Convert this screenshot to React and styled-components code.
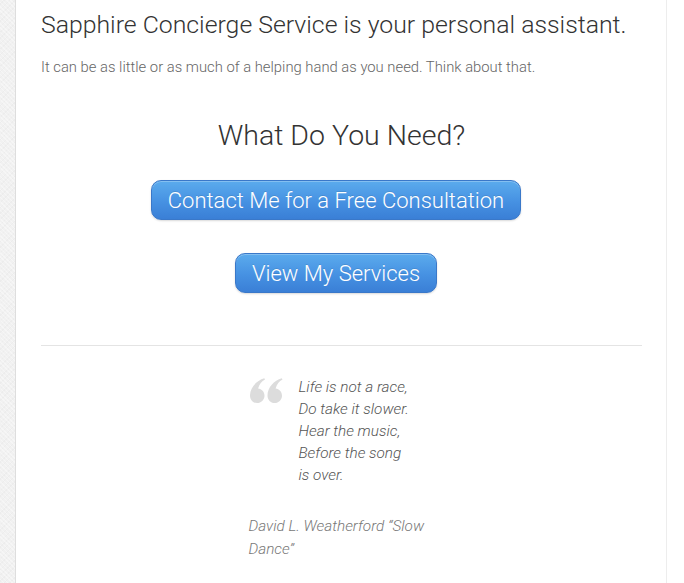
import React from "react";
import styled, { createGlobalStyle } from "styled-components";

const Global = createGlobalStyle`
  html, body { margin: 0; padding: 0; background: #fff; }
  body { font-family: Roboto, "Liberation Sans", Arial, sans-serif; }
  * { box-sizing: border-box; }
`;

const Page = styled.div`
  display: flex;
  min-height: 583px;
  background: #fff;
`;

const Gutter = styled.div`
  width: 16px;
  flex: none;
  background-color: #f1f1f1;
  background-image:
    repeating-linear-gradient(45deg, rgba(255,255,255,0.35) 0 1px, transparent 1px 3px),
    repeating-linear-gradient(-45deg, rgba(0,0,0,0.02) 0 1px, transparent 1px 4px);
  border-right: 1px solid #dedede;
`;

const Panel = styled.main`
  width: 651px;
  flex: none;
  background: #fff;
  border-right: 1px solid #ededed;
  padding: 9px 24px 40px 25px;
`;

const Title = styled.h1`
  margin: 0;
  font-family: Roboto, "Liberation Sans", sans-serif;
  font-weight: 300;
  font-size: 24.8px;
  line-height: 31px;
  color: #333;
`;

const Lead = styled.p`
  margin: 17px 0 0;
  font-family: Roboto, "Liberation Sans", sans-serif;
  font-weight: 300;
  font-size: 14.8px;
  line-height: 20px;
  color: #666;
`;

const Center = styled.section`
  display: flex;
  flex-direction: column;
  align-items: center;
  margin-top: 42px;
`;

const Need = styled.h2`
  margin: 0;
  font-family: Roboto, "Liberation Sans", sans-serif;
  font-weight: 300;
  font-size: 28.5px;
  line-height: 33px;
  color: #333;
`;

const Button = styled.a`
  display: inline-flex;
  align-items: center;
  justify-content: center;
  height: 40px;
  padding: 0 16px;
  margin-top: ${p => p.$mt}px;
  margin-right: 11px;
  border-radius: 10px;
  border: 1px solid #3a78c9;
  background: linear-gradient(#5babed, #4691e2 55%, #3a7fd6);
  box-shadow: inset 0 1px 0 rgba(255,255,255,0.25), 0 1px 2px rgba(0,0,0,0.15);
  color: #fff;
  font-family: Roboto, "Liberation Sans", sans-serif;
  font-weight: 300;
  font-size: 22px;
  text-decoration: none;
  text-shadow: 0 -1px 0 rgba(0,0,0,0.1);
`;

const Rule = styled.hr`
  border: 0;
  border-top: 1px solid #e4e4e4;
  margin: 52px 0 0;
  width: 100%;
`;

const Quote = styled.blockquote`
  width: 186px;
  margin: 30px auto 0;
  padding: 0;
`;

const Verse = styled.div`
  display: flex;
`;

const Mark = styled.svg`
  flex: none;
  width: 34px;
  height: 26px;
  margin: 2px 16px 0 0;
  fill: #dcdcdc;
`;

const Lines = styled.p`
  margin: 0;
  font-family: Roboto, "Liberation Sans", sans-serif;
  font-weight: 300;
  font-style: italic;
  font-size: 15.3px;
  line-height: 22px;
  color: #555;
  white-space: nowrap;
`;

const Cite = styled.cite`
  display: block;
  margin-top: 29px;
  font-family: Roboto, "Liberation Sans", sans-serif;
  font-weight: 300;
  font-style: italic;
  font-size: 15.3px;
  line-height: 23px;
  color: #777;
`;

const six = (dx) =>
  `M${dx + 7.5} 10.5 C${dx + 3.5} 10.5 ${dx + 0.5} 13.7 ${dx + 0.5} 17.7 C${dx + 0.5} 21.8 ${dx + 3.6} 25 ${dx + 7.6} 25 C${dx + 11.6} 25 ${dx + 15} 21.8 ${dx + 15} 17.7 C${dx + 15} 13.9 ${dx + 12.2} 11 ${dx + 8.6} 10.6 C${dx + 9.8} 6.4 ${dx + 12.2} 3.4 ${dx + 15.5} 1.6 L${dx + 14.8} 0.3 C${dx + 7} 2.6 ${dx + 0.6} 9.4 ${dx + 0.5} 17.5 Z`;

export default function App() {
  return (
    <>
      <Global />
      <Page>
        <Gutter />
        <Panel>
          <Title>Sapphire Concierge Service is your personal assistant.</Title>
          <Lead>It can be as little or as much of a helping hand as you need. Think about that.</Lead>
          <Center>
            <Need>What Do You Need?</Need>
            <Button href="#" $mt={28}>Contact Me for a Free Consultation</Button>
            <Button href="#" $mt={33}>View My Services</Button>
          </Center>
          <Rule />
          <Quote>
            <Verse>
              <Mark viewBox="0 0 34 26" aria-hidden="true">
                <path d={six(0.5)} />
                <path d={six(18)} />
              </Mark>
              <Lines>
                Life is not a race,<br />
                Do take it slower.<br />
                Hear the music,<br />
                Before the song<br />
                is over.
              </Lines>
            </Verse>
            <Cite>David L. Weatherford “Slow Dance”</Cite>
          </Quote>
        </Panel>
      </Page>
    </>
  );
}
